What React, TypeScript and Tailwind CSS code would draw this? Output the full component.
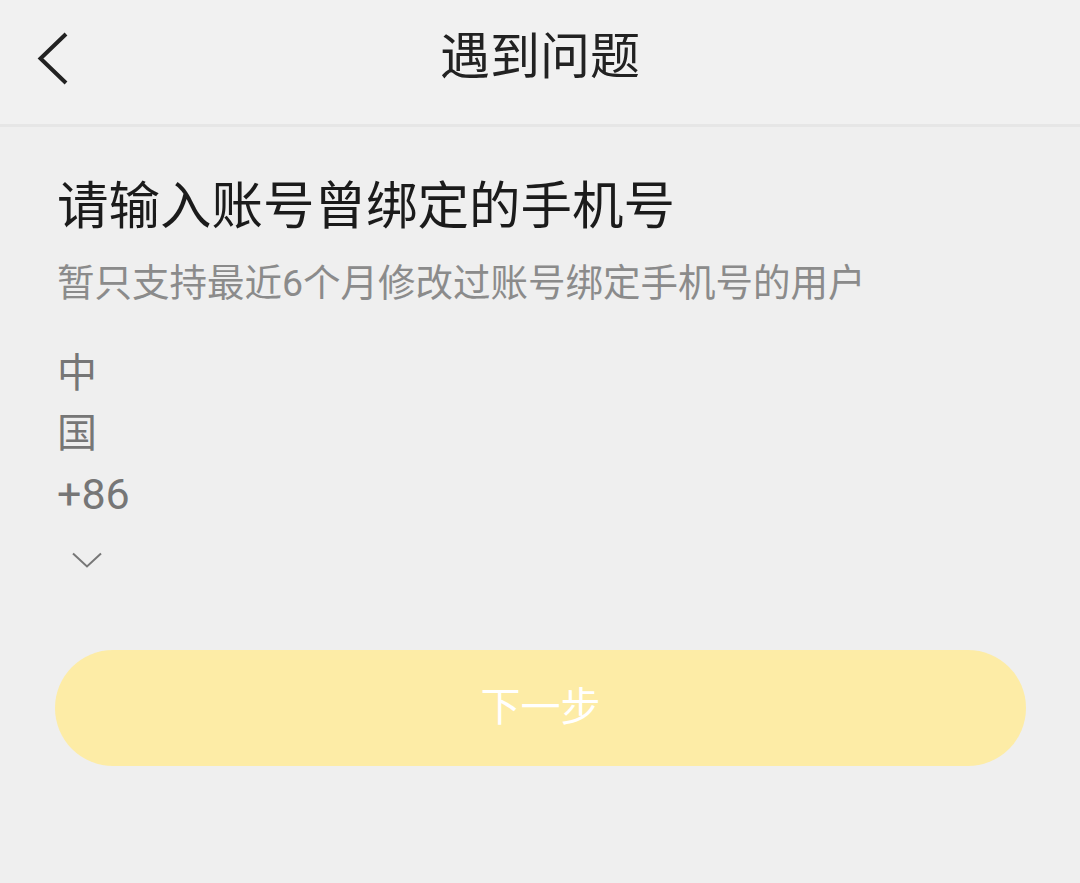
const font = "font-['Roboto','Noto_Sans_CJK_SC',sans-serif]"

function CountryPicker() {
  return (
    <div className="mt-[36px] flex flex-col text-[40px] leading-[60px] text-[#767676]">
      <span>中</span>
      <span>国</span>
      <span className="text-[43px]">+86</span>
      <div className="flex h-[72px] items-center pl-[15px]">
        <svg width="30" height="16" viewBox="0 0 30 16" fill="none">
          <path d="M1 1.5 L15 14.5 L29 1.5" stroke="#777" strokeWidth="2" />
        </svg>
      </div>
    </div>
  )
}

export default function App() {
  return (
    <div className={`min-h-[883px] w-full bg-[#efefef] ${font}`}>
      {/* Header */}
      <header className="grid h-[127px] grid-cols-[1fr_auto_1fr] items-center border-b-[3px] border-[#e6e6e6] bg-[#f1f1f1] pb-[10px]">
        <div className="pl-[28px]">
          <svg width="40" height="56" viewBox="0 0 40 56" fill="none">
            <path d="M38 5 L12.5 29.5 L38 54" stroke="#222" strokeWidth="4" strokeLinejoin="miter" />
          </svg>
        </div>
        <h1 className="text-[50px] leading-[60px] text-[#222]">遇到问题</h1>
        <div />
      </header>

      {/* Body */}
      <main className="flex flex-col pl-[57px] pt-[49px]">
        <h2 className="text-[51.5px] leading-[62px] text-[#1b1b1b]">请输入账号曾绑定的手机号</h2>
        <p className="mt-[20px] text-[37.5px] leading-[50px] text-[#8b8b8b]">
          暂只支持最近6个月修改过账号绑定手机号的用户
        </p>
        <CountryPicker />
      </main>

      <div className="mt-[54px] pl-[55px] pr-[54px]">
        <button className="flex h-[116px] w-full items-center justify-center rounded-full bg-[#fdeca6] text-[40px] text-white">
          下一步
        </button>
      </div>
    </div>
  )
}
